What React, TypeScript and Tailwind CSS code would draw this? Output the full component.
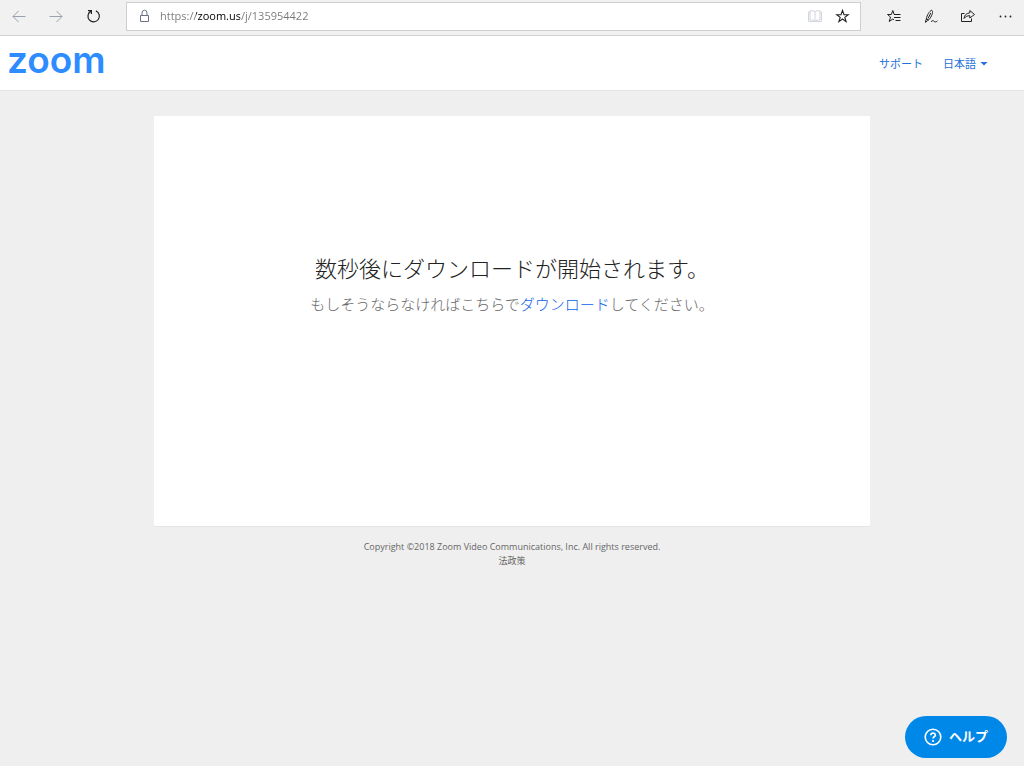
import React from 'react';

const iconProps = {
  fill: 'none',
  stroke: 'currentColor',
  'aria-hidden': true,
};

const BackIcon = () => (
  <svg {...iconProps} className="w-4 h-4" viewBox="0 0 16 16">
    <path d="M14.5 8.5H2M7.5 3L2 8.5L7.5 14" />
  </svg>
);

const ForwardIcon = () => (
  <svg {...iconProps} className="w-4 h-4" viewBox="0 0 16 16">
    <path d="M1.5 8.5H14M8.5 3L14 8.5L8.5 14" />
  </svg>
);

const RefreshIcon = () => (
  <svg {...iconProps} className="w-4 h-4" viewBox="0 0 16 16">
    <path d="M10.9 2.9A5.7 5.7 0 1 1 6 3.1" strokeWidth="1.2" />
    <path d="M3 2.6H6.4V6" strokeWidth="1.2" />
  </svg>
);

const LockIcon = () => (
  <svg {...iconProps} className="w-4 h-4 shrink-0 text-gray-500" viewBox="0 0 16 16">
    <path d="M4.5 7.5H12.5V13.5H4.5ZM6 7.5V5A2.5 2.8 0 0 1 11 5V7.5" />
  </svg>
);

const BookIcon = () => (
  <svg {...iconProps} className="w-4 h-4" viewBox="0 0 16 16">
    <path d="M8 4V14M8 4C7 2.6 5.5 2.6 3 2.8V12C5 11.8 7 12 8 13.6C9 12 11 11.8 13 12V2.8C10.5 2.6 9 2.6 8 4Z" />
    <path d="M3 4H1.5V13.5H14.5V4H13" />
  </svg>
);

const StarIcon = () => (
  <svg {...iconProps} className="w-4 h-4" viewBox="0 0 16 16">
    <path d="M7.5 2.5L9 6.8H13.2L9.8 9.4L11.1 13.6L7.5 11L3.9 13.6L5.2 9.4L1.8 6.8H6Z" strokeWidth="1.1" />
  </svg>
);

const FavoritesIcon = () => (
  <svg {...iconProps} className="w-4 h-4" viewBox="0 0 16 16">
    <path d="M9.5 6.5H8.2L6.8 2.5L5.3 6.5H1.5L4.5 9L3.2 13.5L6.8 11L8 11.8M8.2 6.5H14.5M8 9.5H14.5M9.5 12.5H14.5" />
  </svg>
);

const PenIcon = () => (
  <svg {...iconProps} className="w-4 h-4" viewBox="0 0 16 16">
    <path d="M2.3 14.3L3.3 11C4 7 6.5 3 8.6 2.2C10.4 3 9.4 7 6.9 10.5L4.4 13L2.3 14.3M3.3 11L5.6 12M5 10.5L7.8 5M8 13.8C9.4 12.2 10.3 12.5 11.3 13.5C12.3 14.3 13.3 14 14.5 12.8" />
  </svg>
);

const ShareIcon = () => (
  <svg {...iconProps} className="w-4 h-4" viewBox="0 0 16 16">
    <path d="M4.5 5.5H1.5V13.5H11.5V10.5" />
    <path d="M9.8 2.5L14.5 6.5L9.8 10V7.7C7.2 7.7 5.6 8.6 4 10.5C4.4 7.2 6.2 5.2 9.8 4.9Z" />
  </svg>
);

const MoreIcon = () => (
  <svg className="w-4 h-4" viewBox="0 0 16 16" fill="currentColor" aria-hidden>
    <circle cx="3.5" cy="8.5" r="0.9" />
    <circle cx="8.5" cy="8.5" r="0.9" />
    <circle cx="13.5" cy="8.5" r="0.9" />
  </svg>
);

const HelpIcon = () => (
  <svg {...iconProps} className="w-[18px] h-[18px]" viewBox="0 0 18 18">
    <circle cx="9" cy="9" r="7.8" strokeWidth="1.6" />
    <path d="M6.8 7.2C6.8 4.2 11.4 4.4 11.3 7.2C11.2 8.8 9 8.8 9 10.6" strokeWidth="1.7" />
    <circle cx="9" cy="13" r="1.1" fill="currentColor" stroke="none" />
  </svg>
);

const tools = [
  { label: 'Hub', icon: <FavoritesIcon /> },
  { label: 'Notes', icon: <PenIcon /> },
  { label: 'Share', icon: <ShareIcon /> },
  { label: 'More', icon: <MoreIcon /> },
];

const BrowserBar: React.FC = () => (
  <div className="flex h-9 items-center border-b border-[#d2d2d2] bg-[#f1f1f1] pb-[3px] text-[#222]">
    <div className="flex gap-[21px] pl-[11px]">
      <button aria-label="Back" className="text-gray-400"><BackIcon /></button>
      <button aria-label="Forward" className="text-gray-400"><ForwardIcon /></button>
      <button aria-label="Refresh"><RefreshIcon /></button>
    </div>
    <div className="ml-[25px] flex h-[29px] min-w-0 flex-1 items-center border border-[#cfcfcf] bg-white px-[9px]">
      <LockIcon />
      <input
        type="text"
        aria-label="Address"
        defaultValue="https://zoom.us/j/135954422"
        className="ml-2 min-w-0 flex-1 bg-[linear-gradient(to_right,#777_36px,#000_36px,#000_80px,#777_80px)] bg-clip-text font-['Open_Sans','Noto_Sans',sans-serif] text-[11px] text-transparent outline-none"
      />
      <div className="flex gap-3">
        <button aria-label="Reading view" className="text-gray-300"><BookIcon /></button>
        <button aria-label="Add to favorites"><StarIcon /></button>
      </div>
    </div>
    <div className="ml-[25px] mr-[11px] flex gap-[21px]">
      {tools.map((tool) => (
        <button key={tool.label} aria-label={tool.label}>
          {tool.icon}
        </button>
      ))}
    </div>
  </div>
);

const Header: React.FC = () => (
  <header className="flex h-[55px] items-center justify-between border-b border-[#e4e4e4] bg-white pl-[7px] pr-9">
    <a href="#home" className="pb-1.5 font-['Inter',sans-serif] text-[37px] font-semibold leading-10 text-[#2d8cff]">
      zoom
    </a>
    <nav className="flex items-center gap-5 pt-0.5 text-[11px] text-[#2371d8]">
      <a href="#support">サポート</a>
      <button className="flex items-center gap-1">
        日本語
        <svg className="h-1 w-2" viewBox="0 0 8 4" fill="currentColor" aria-hidden>
          <path d="M0.5 0H7.5L4 3.5Z" />
        </svg>
      </button>
    </nav>
  </header>
);

const App: React.FC = () => {
  return (
    <div className="min-h-screen bg-[#efefef] font-['Open_Sans','Noto_Sans_CJK_JP',sans-serif]">
      <BrowserBar />
      <Header />
      <main className="mx-auto mt-[25px] w-[70%] border-b border-[#e4e4e4] bg-white pt-[136px] pb-[206px] text-center">
        <h1 className="text-[22px] font-light leading-8 text-[#222]">数秒後にダウンロードが開始されます。</h1>
        <p className="mt-1 text-[15px] font-light leading-8 text-[#666]">
          もしそうならなければこちらで
          <a href="#download" className="text-[#0e61eb]">ダウンロード</a>
          してください。
        </p>
      </main>
      <footer className="mt-[13px] text-center text-[9px] leading-[14px] text-[#666]">
        <p>Copyright ©2018 Zoom Video Communications, Inc. All rights reserved.</p>
        <a href="#legal">法政策</a>
      </footer>
      <button className="fixed bottom-2 right-[17px] flex h-[42px] items-center gap-[7px] rounded-full bg-[#0088e8] px-[19px] text-[13px] font-bold text-white">
        <HelpIcon />
        ヘルプ
      </button>
    </div>
  );
};

export default App;
